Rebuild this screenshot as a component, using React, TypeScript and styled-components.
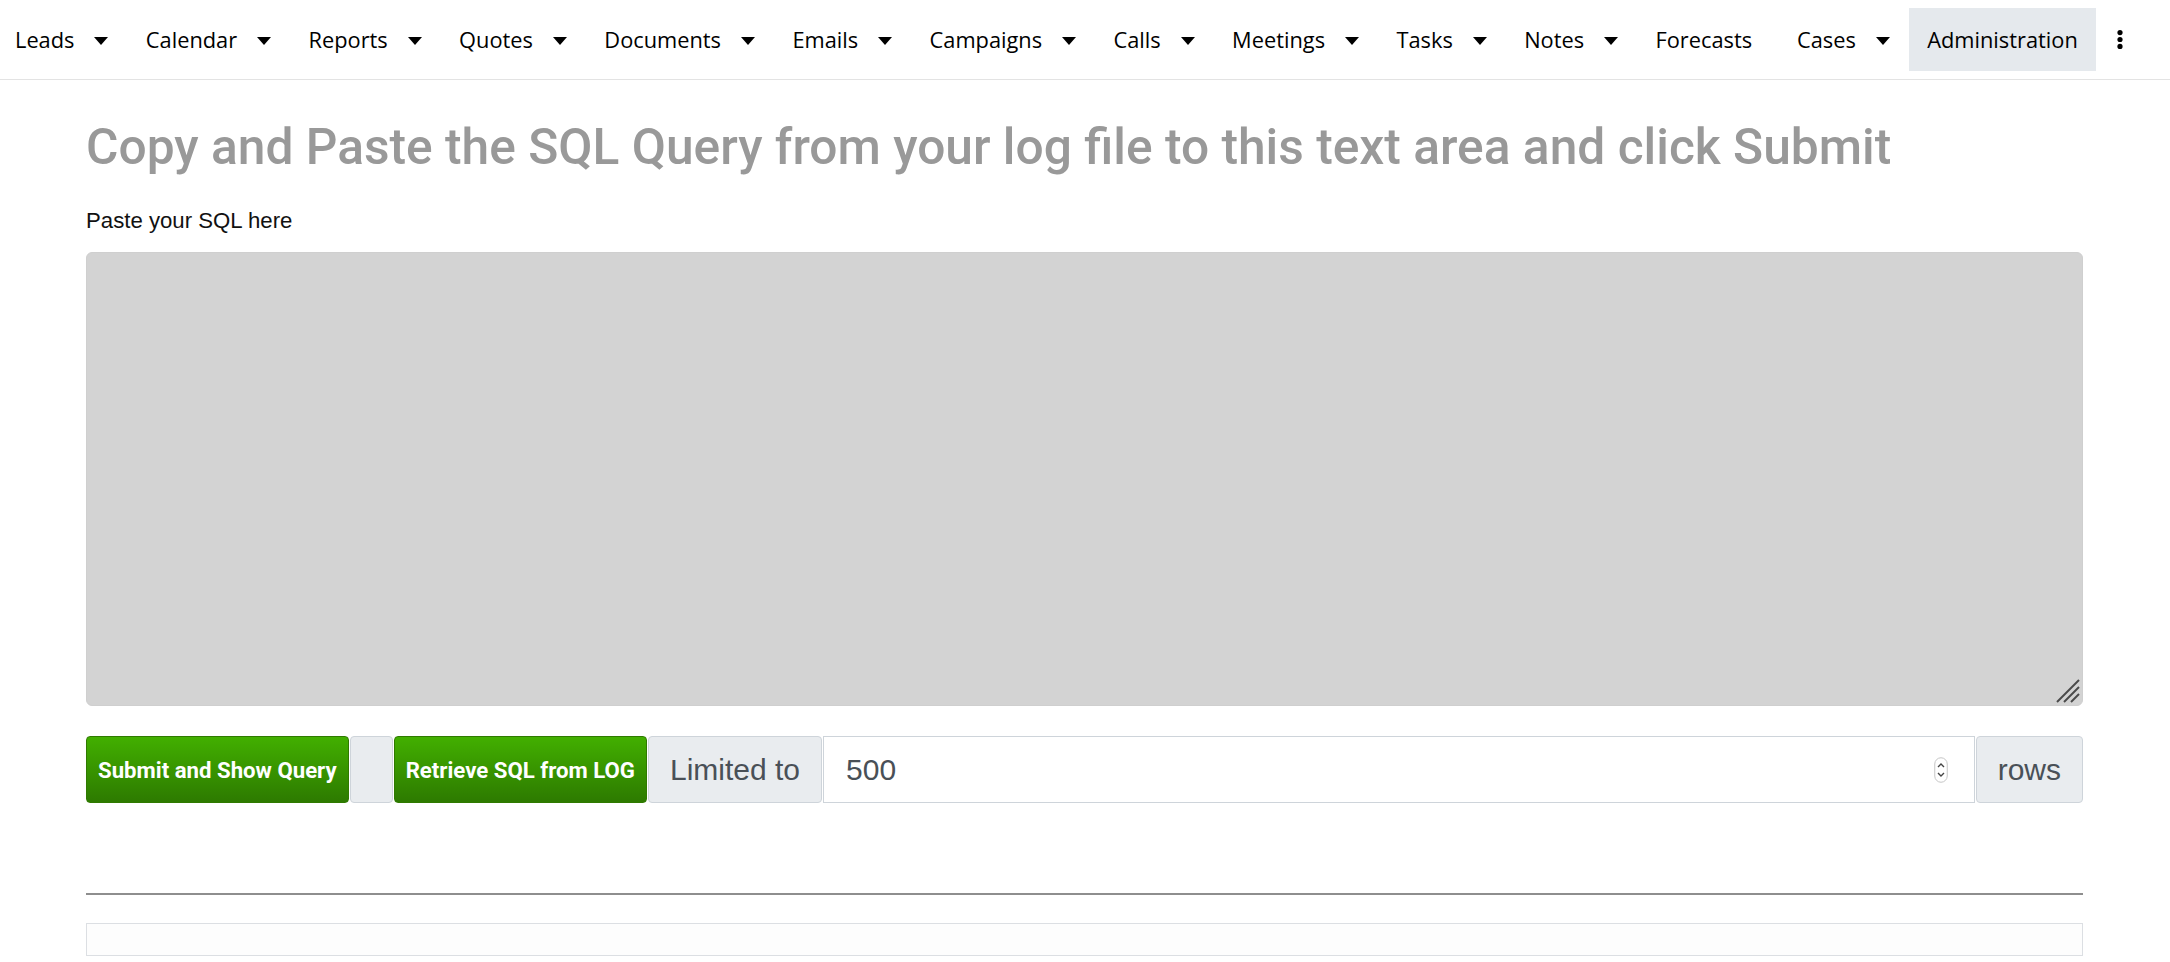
import React from 'react'
import styled, { createGlobalStyle } from 'styled-components'

const GlobalStyle = createGlobalStyle`
  html, body {
    margin: 0;
    padding: 0;
    background: #ffffff;
    overflow: hidden;
  }
  body {
    font-family: 'Liberation Sans', Arial, sans-serif;
    color: #212529;
  }
  * {
    box-sizing: border-box;
  }
`

const NavBar = styled.nav`
  display: flex;
  align-items: center;
  height: 80px;
  border-bottom: 1px solid #e3e3e3;
`

const NavItem = styled.a<{ $active?: boolean; $first?: boolean; $trail?: number }>`
  display: flex;
  align-items: center;
  height: 63px;
  padding: 0 ${(p) => 18.7 + (p.$trail || 0)}px 0 ${(p) => (p.$first ? 15 : 18.7)}px;
  background: ${(p) => (p.$active ? '#e5e9ed' : 'transparent')};
  font-family: 'Open Sans', sans-serif;
  font-size: 21.8px;
  color: #000;
  text-decoration: none;
  white-space: nowrap;
  cursor: pointer;

  svg {
    margin-left: 20px;
    margin-top: 2px;
  }
`

const MoreButton = styled.button`
  display: flex;
  align-items: center;
  justify-content: center;
  margin-left: 19px;
  padding: 0;
  width: 10px;
  height: 40px;
  border: none;
  background: none;
  cursor: pointer;
`

const Main = styled.main`
  padding: 0 87px 0 86px;
`

const Title = styled.h1`
  margin: 36px 0 0;
  font-family: Roboto, 'Liberation Sans', sans-serif;
  font-weight: 500;
  font-size: 49.7px;
  line-height: 62px;
  color: #999999;
  white-space: nowrap;
`

const Label = styled.label`
  display: block;
  margin-top: 30px;
  font-size: 22.2px;
  line-height: 26px;
  color: #111;
`

const AreaWrap = styled.div`
  position: relative;
  margin-top: 18px;
`

const SqlArea = styled.textarea`
  display: block;
  width: 100%;
  height: 454px;
  background: #d3d3d3;
  border: 1px solid #cfcfcf;
  border-radius: 6px;
  resize: none;
  outline: none;
`

const Grip = styled.svg`
  position: absolute;
  right: 3px;
  bottom: 3px;
  pointer-events: none;
`

const ActionRow = styled.div`
  display: flex;
  align-items: stretch;
  height: 67px;
  margin-top: 30px;

  & > *:last-child {
    margin-right: 0;
  }
`

const GreenButton = styled.button`
  display: flex;
  align-items: center;
  padding: 0 11px;
  margin-right: 1px;
  border: 1px solid #2f7a00;
  border-radius: 4px;
  background: linear-gradient(#42af00, #2d7a00);
  color: #fff;
  font-family: Roboto, 'Liberation Sans', Arial, sans-serif;
  font-weight: 700;
  font-size: 22.2px;
  white-space: nowrap;
  cursor: pointer;
`

const Addon = styled.span<{ $width?: number }>`
  display: flex;
  align-items: center;
  justify-content: center;
  ${(p) => (p.$width ? `width: ${p.$width}px;` : 'padding: 0 21px;')}
  margin-right: 1px;
  background: #e9ecef;
  border: 1px solid #ced4da;
  border-radius: 4px;
  color: #495057;
  font-size: 30px;
  white-space: nowrap;
`

const NumberField = styled.div`
  display: flex;
  align-items: center;
  flex: 1;
  padding: 0 26px 0 22px;
  border: 1px solid #ced4da;
  margin-right: 1px;
  background: #fff;

  input {
    flex: 1;
    min-width: 0;
    border: none;
    outline: none;
    background: transparent;
    padding: 0;
    font-family: 'Liberation Sans', Arial, sans-serif;
    font-size: 30px;
    color: #495057;
  }
`

const Divider = styled.hr`
  margin: 90px 0 0;
  height: 0;
  border: none;
  border-top: 2px solid #8e8e8e;
`

const ResultBox = styled.div`
  height: 33px;
  margin-top: 28px;
  border: 1px solid #dcdfe3;
  background: #fdfdfd;
`

const Caret = () => (
  <svg width="14" height="8" viewBox="0 0 14 8">
    <polygon points="0,0 14,0 7,8" fill="#000" />
  </svg>
)

const Kebab = () => (
  <svg width="6" height="19" viewBox="0 0 6 19">
    <circle cx="3" cy="2.6" r="2.6" fill="#000" />
    <circle cx="3" cy="9.5" r="2.6" fill="#000" />
    <circle cx="3" cy="16.4" r="2.6" fill="#000" />
  </svg>
)

const Spinner = () => (
  <svg width="14" height="26" viewBox="0 0 14 26">
    <rect x="0.75" y="0.75" width="12.5" height="24.5" rx="6.25" fill="#fff" stroke="#c6c6c6" strokeWidth="1" />
    <polyline points="4,10 7,7 10,10" fill="none" stroke="#444" strokeWidth="1.4" />
    <polyline points="4,16 7,19 10,16" fill="none" stroke="#444" strokeWidth="1.4" />
  </svg>
)

const modules = [
  { name: 'Leads', menu: true },
  { name: 'Calendar', menu: true },
  { name: 'Reports', menu: true },
  { name: 'Quotes', menu: true },
  { name: 'Documents', menu: true },
  { name: 'Emails', menu: true },
  { name: 'Campaigns', menu: true },
  { name: 'Calls', menu: true },
  { name: 'Meetings', menu: true },
  { name: 'Tasks', menu: true },
  { name: 'Notes', menu: true },
  { name: 'Forecasts', menu: false },
  { name: 'Cases', menu: true },
]

export default function App() {
  return (
    <>
      <GlobalStyle />
      <NavBar>
        {modules.map((m, i) => (
          <NavItem key={m.name} $first={i === 0} $trail={m.menu ? 0 : 7.5}>
            {m.name}
            {m.menu && <Caret />}
          </NavItem>
        ))}
        <NavItem $active>Administration</NavItem>
        <MoreButton aria-label="More">
          <Kebab />
        </MoreButton>
      </NavBar>
      <Main>
        <Title>Copy and Paste the SQL Query from your log file to this text area and click Submit</Title>
        <Label htmlFor="sql">Paste your SQL here</Label>
        <AreaWrap>
          <SqlArea id="sql" />
          <Grip width="26" height="26" viewBox="0 0 26 26">
            <line x1="25" y1="3" x2="3" y2="25" stroke="#4a4a4a" strokeWidth="2" />
            <line x1="25" y1="10" x2="10" y2="25" stroke="#4a4a4a" strokeWidth="2" />
            <line x1="25" y1="17" x2="17" y2="25" stroke="#4a4a4a" strokeWidth="2" />
          </Grip>
        </AreaWrap>
        <ActionRow>
          <GreenButton>Submit and Show Query</GreenButton>
          <Addon $width={43} />
          <GreenButton>Retrieve SQL from LOG</GreenButton>
          <Addon>Limited to</Addon>
          <NumberField>
            <input type="text" defaultValue="500" />
            <Spinner />
          </NumberField>
          <Addon>rows</Addon>
        </ActionRow>
        <Divider />
        <ResultBox />
      </Main>
    </>
  )
}
